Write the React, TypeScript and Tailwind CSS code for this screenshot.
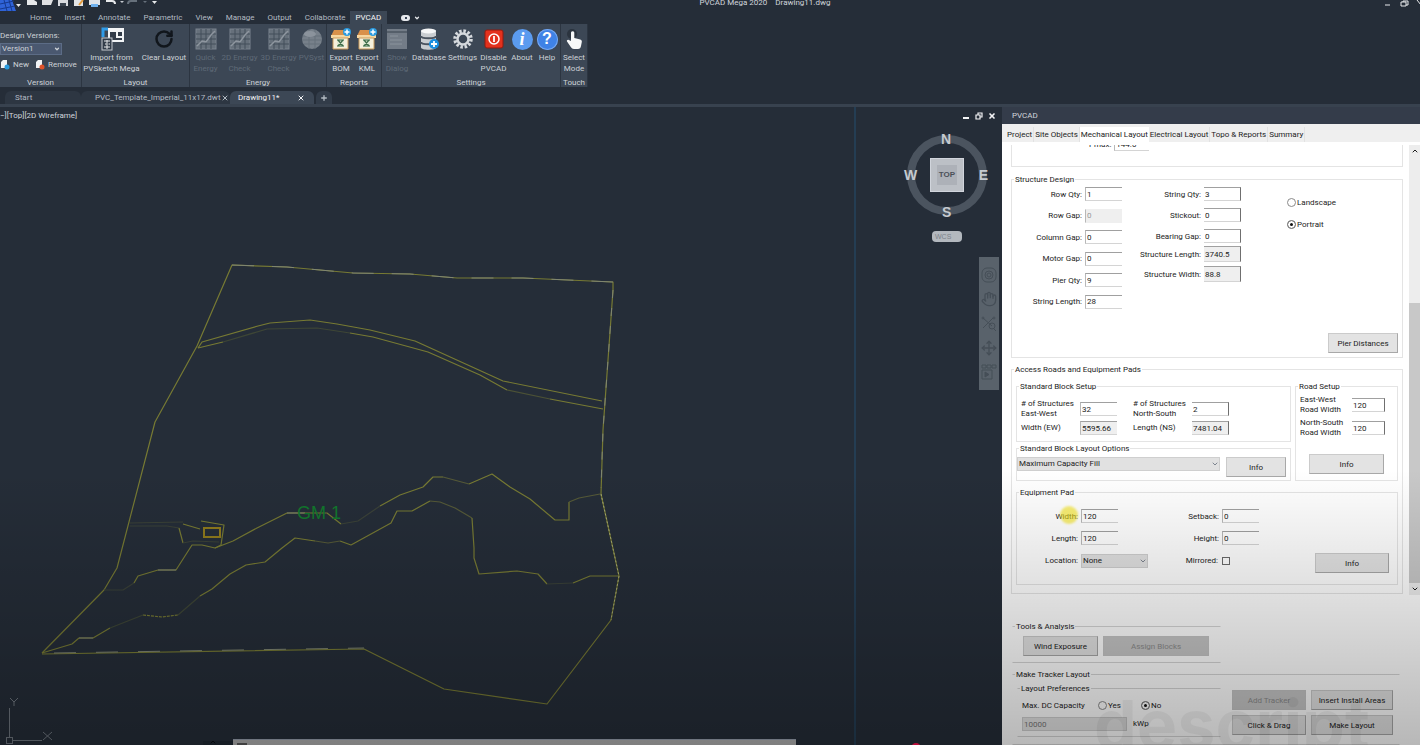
import { useId, type ReactNode } from 'react';
import { ChevronDown, ChevronUp, Hand, Move, Plus, RotateCw, X } from 'lucide-react';
import { clsx } from 'clsx';

const MENU = ['Home', 'Insert', 'Annotate', 'Parametric', 'View', 'Manage', 'Output', 'Collaborate'];

/* ---------- Ribbon icons ---------- */

function ImportIcon() {
  return (
    <svg viewBox="0 0 24 24" className="size-6">
      <path d="M3 10V2h5" fill="none" stroke="#2f9be8" strokeWidth="3" />
      <rect x="9" y="2" width="14" height="12" fill="#323c49" stroke="#f2f4f6" strokeWidth="2" />
      <path d="M9 4h14M17 5v5h6" stroke="#f2f4f6" strokeWidth="2" fill="none" />
      <rect x="2" y="11" width="10" height="12" fill="#323c49" stroke="#c5cad0" />
      <path d="M4 14h6M4 20h6M5 17h1.500M8.500 17H10M7 13v9" stroke="#e8eaec" />
    </svg>
  );
}

function GridIcon() {
  return (
    <svg viewBox="0 0 24 24" className="size-6">
      <rect x="2" y="2" width="20" height="20" fill="#66707b" stroke="#7b848f" />
      <path d="M2 7h20M2 12h20M2 17h20M7 2v20M12 2v20M17 2v20" stroke="#434e5b" />
      <path d="M3 19l5-5 4 1 5-7 4-4" stroke="#8e969f" strokeWidth="1.500" fill="none" />
    </svg>
  );
}

function SphereIcon() {
  return (
    <svg viewBox="0 0 24 24" className="size-6">
      <circle cx="12" cy="12" r="10" fill="#77808a" />
      <path d="M3 9h18M2 13h20M4 17h16M9 3v19M15 3v19" stroke="#66707b" />
      <ellipse cx="10" cy="7" rx="6" ry="3" fill="#8b939c" />
    </svg>
  );
}

function ExportIcon() {
  return (
    <svg viewBox="0 0 24 24" className="size-6">
      <path d="M2 9l3-6h11l5 6z" fill="#d9914a" />
      <path d="M2 8h19v3H2z" fill="#f7d7a0" />
      <path d="M4 11h15v11H4z" fill="#f5f0dc" stroke="#c99a5a" />
      <path d="M8 12h7v8H8z" fill="#dfe8d4" />
      <path d="M9 13l5 6M14 13l-5 6M8 13h7M8 19h7" stroke="#3c6b46" strokeWidth="1.200" />
      <circle cx="18" cy="5" r="4" fill="#2a9be0" />
      <path d="M18 2.500v5M15.500 5h5" stroke="#fff" strokeWidth="1.500" />
    </svg>
  );
}

function DialogIcon() {
  return (
    <svg viewBox="0 0 24 24" className="size-6">
      <rect x="2" y="2" width="20" height="20" fill="#737c87" />
      <path d="M2 5h20M8 5h12" stroke="#4c5662" strokeWidth="1.500" />
      <path d="M5 9h8M5 13h12M5 17h12" stroke="#8b939c" />
    </svg>
  );
}

function DatabaseIcon() {
  return (
    <svg viewBox="0 0 24 24" className="size-6">
      <path d="M4 3.500v17c0 3 15 3 15 0v-17z" fill="#c9cdd1" />
      <path d="M4 9c0 3 15 3 15 0M4 15c0 3 15 3 15 0" stroke="#4a535f" strokeWidth="2" fill="none" />
      <ellipse cx="11.500" cy="4" rx="7.500" ry="2.500" fill="#f6f7f8" />
      <circle cx="17" cy="17" r="5" fill="#1b8fe0" />
      <path d="M17 14v6M14 17h6" stroke="#fff" strokeWidth="1.800" />
    </svg>
  );
}

function GearIcon() {
  return (
    <svg viewBox="0 0 24 24" className="size-6">
      <circle cx="12" cy="12" r="8" fill="none" stroke="#d5d9dd" strokeWidth="3.500" strokeDasharray="2.500 1.700" />
      <circle cx="12" cy="12" r="5.500" fill="none" stroke="#d5d9dd" strokeWidth="2.500" />
    </svg>
  );
}

function PowerIcon() {
  return (
    <svg viewBox="0 0 24 24" className="size-6">
      <rect x="3" y="3" width="18" height="18" rx="2" fill="#e3311d" stroke="#8f1a10" />
      <circle cx="12" cy="12" r="5" fill="none" stroke="#fff" strokeWidth="1.500" />
      <path d="M12 9v6" stroke="#fff" strokeWidth="1.800" />
    </svg>
  );
}

function BadgeIcon({ glyph }: { glyph: 'i' | '?' }) {
  return (
    <span
      className={clsx(
        'flex size-[21px] items-center justify-center rounded-full leading-none font-bold text-white',
        glyph === 'i'
          ? 'bg-[#5b9bef] font-["Liberation_Serif",serif] text-[18px] italic'
          : 'bg-[#3f82e6] font-["Liberation_Sans",sans-serif] text-[16px] ring-1 ring-[#78a9f0] ring-inset',
      )}
    >
      {glyph}
    </span>
  );
}

function TouchIcon() {
  return (
    <svg viewBox="0 0 24 24" className="size-6">
      <circle cx="10" cy="7" r="5" fill="#2b343f" />
      <path
        d="M9 14V5.500a1.700 1.700 0 0 1 3.300 0V11l6 1.500c1.200.4 1.700 1.200 1.500 2.500L19 19c-.3 2-1.300 3-3 3h-4c-1.500 0-2.400-.7-3.200-2L5 14.500c-.6-1.200.8-2.200 1.800-1.500z"
        fill="#f7f8f9"
      />
    </svg>
  );
}

function DocIcon({ color }: { color: string }) {
  return (
    <svg viewBox="0 0 10 10" className="size-[10px]">
      <path d="M1 2l2-2h4v8H1z" fill="#f1f3f5" />
      <circle cx="7" cy="7" r="2.500" fill={color} />
    </svg>
  );
}

/* ---------- Header ---------- */

function TitleBar() {
  return (
    <div className="grid h-[11px] grid-cols-[1fr_auto_1fr] items-start overflow-hidden">
      <svg viewBox="0 0 165 11" className="h-[11px] w-[165px]">
        <path d="M0 0h12l4 11-16 4z" fill="#2f63d8" />
        <path d="M0 4l14-3M0 9l15-3M4 0l3 11M9 0l3 11" stroke="#173a8f" />
        <path d="M16 4h5l-2.500 3z" fill="#e8eaec" />
        <path d="M27 0h7l3 2v3H27z" fill="#e6e8ea" />
        <path d="M42 0h11l-2 5h-9z" fill="#dfe1e3" />
        <path d="M58 0h10v6H58z" fill="#d9dce0" />
        <path d="M60 3h6v3h-6z" fill="#39434f" />
        <path d="M74 0h9v6h-9z" fill="#e2e4e6" />
        <path d="M79 5l4-5" stroke="#e39a3b" strokeWidth="2" />
        <path d="M89 0h11v5H89z" fill="#dfe3e8" />
        <path d="M91 4h7v3h-7z" fill="#6fb1ee" />
        <path d="M106 1h6q3 0 3 3" stroke="#e8eaec" strokeWidth="2" fill="none" />
        <path d="M120 1h4l-2 2z" fill="#c6cacf" />
        <path d="M137 1h-6q-3 0-3 3" stroke="#66707b" strokeWidth="2" fill="none" />
        <path d="M143 1h4l-2 2z" fill="#66707b" />
        <path d="M152 1h5l-2.500 3z" fill="#e8eaec" />
      </svg>
      <div className="-mt-[3px] flex gap-2 pl-[110px] leading-[11px] text-gray-300">
        <span>PVCAD Mega 2020</span>
        <span>Drawing11.dwg</span>
      </div>
      <svg viewBox="0 0 36 11" className="h-[11px] w-9 justify-self-end">
        <path d="M1 5h5M17 2h5v4h-5zM19 2V1h5v4h-2" stroke="#e8eaec" fill="none" />
        <path d="M33 0l4 5" stroke="#e8eaec" />
      </svg>
    </div>
  );
}

function MenuBar() {
  return (
    <nav className="flex h-[13px] items-stretch pl-[30px] leading-[13px] text-[#b3bac2]">
      <div className="flex gap-[13px]">
        {MENU.map((item) => (
          <button key={item} type="button">{item}</button>
        ))}
      </div>
      <button type="button" className="ml-1 bg-[#3c4755] px-[6px] text-gray-100">PVCAD</button>
      <button type="button" aria-label="Ribbon display" className="ml-[14px] flex items-center gap-1">
        <span className="flex h-[6px] w-[9px] items-center justify-center rounded-sm bg-gray-200">
          <span className="size-[2px] bg-gray-700" />
        </span>
        <ChevronDown className="size-[6px] text-gray-200" strokeWidth={5} />
      </button>
    </nav>
  );
}

function RibbonPanel({ title, className, children }: { title: string; className: string; children: ReactNode }) {
  return (
    <section className={clsx('flex shrink-0 flex-col border-r border-[#2c3541] bg-[#3c4755]', className)}>
      <div className="flex flex-1 justify-center pt-[3px]">{children}</div>
      <h2 className="h-[11px] text-center leading-[13px] text-[#cdd2d7]">{title}</h2>
    </section>
  );
}

type ToolProps = { icon: ReactNode; lines: string[]; className: string; disabled?: boolean };

function Tool({ icon, lines, className, disabled }: ToolProps) {
  return (
    <button
      type="button"
      disabled={disabled}
      className={clsx(
        'flex shrink-0 flex-col items-center leading-[11px] whitespace-nowrap',
        disabled ? 'text-[#5f6a77]' : 'text-[#cdd2d7]',
        className,
      )}
    >
      <span className="mb-px flex size-6 items-center justify-center">{icon}</span>
      {lines.map((line) => (
        <span key={line}>{line}</span>
      ))}
    </button>
  );
}

function Ribbon() {
  return (
    <div className="flex h-[63px]">
      <RibbonPanel title="Version" className="w-[82px]">
        <div className="flex w-full flex-col pt-[2px] text-[#cdd2d7]">
          <label htmlFor="version" className="leading-[13px] whitespace-nowrap">Design Versions:</label>
          <div className="relative mt-[1px] w-[62px]">
            <select id="version" className="block h-3 w-full appearance-none border border-[#5c6c86] bg-[#4a5870] pl-[1px] leading-[10px]">
              <option>Version1</option>
            </select>
            <ChevronDown className="pointer-events-none absolute top-[3px] right-[2px] size-[6px]" strokeWidth={5} />
          </div>
          <div className="mt-1 flex gap-[6px] leading-[11px]">
            <button type="button" className="flex items-center gap-[3px]"><DocIcon color="#2a9be0" />New</button>
            <button type="button" className="flex items-center gap-[3px]"><DocIcon color="#e0522a" />Remove</button>
          </div>
        </div>
      </RibbonPanel>
      <RibbonPanel title="Layout" className="w-[108px]">
        <Tool icon={<ImportIcon />} lines={['Import from', 'PVSketch Mega']} className="w-[57px]" />
        <Tool icon={<RotateCw className="size-5 text-[#11161c]" strokeWidth={3} />} lines={['Clear Layout']} className="w-[48px]" />
      </RibbonPanel>
      <RibbonPanel title="Energy" className="w-[137px]">
        <Tool disabled icon={<GridIcon />} lines={['Quick', 'Energy']} className="w-[29px]" />
        <Tool disabled icon={<GridIcon />} lines={['2D Energy', 'Check']} className="w-[39px]" />
        <Tool disabled icon={<GridIcon />} lines={['3D Energy', 'Check']} className="w-[39px]" />
        <Tool disabled icon={<SphereIcon />} lines={['PVSyst']} className="w-[27px]" />
      </RibbonPanel>
      <RibbonPanel title="Reports" className="w-[55px]">
        <Tool icon={<ExportIcon />} lines={['Export', 'BOM']} className="w-[26px]" />
        <Tool icon={<ExportIcon />} lines={['Export', 'KML']} className="w-[26px]" />
      </RibbonPanel>
      <RibbonPanel title="Settings" className="w-[179px]">
        <Tool disabled icon={<DialogIcon />} lines={['Show', 'Dialog']} className="w-[28px]" />
        <Tool icon={<DatabaseIcon />} lines={['Database']} className="w-[36px]" />
        <Tool icon={<GearIcon />} lines={['Settings']} className="w-[31px]" />
        <Tool icon={<PowerIcon />} lines={['Disable', 'PVCAD']} className="w-[31px]" />
        <Tool icon={<BadgeIcon glyph="i" />} lines={['About']} className="w-[26px]" />
        <Tool icon={<BadgeIcon glyph="?" />} lines={['Help']} className="w-[24px]" />
      </RibbonPanel>
      <RibbonPanel title="Touch" className="w-[27px]">
        <Tool icon={<TouchIcon />} lines={['Select', 'Mode']} className="w-[26px]" />
      </RibbonPanel>
    </div>
  );
}

function FileTabs() {
  return (
    <div className="flex h-[20px] items-end border-b-[3px] border-[#38424f] text-[#b3bac2]">
      <div className="flex h-[13px] items-center">
        <button type="button" className="ml-[5px] h-full w-[76px] rounded-t-md bg-[#2d3642] pl-[10px] text-left">Start</button>
        <div className="flex h-full w-[149px] items-center justify-between rounded-t-md bg-[#2d3642] pr-[5px] pl-[14px]">
          <button type="button">PVC_Template_Imperial_11x17.dwt</button>
          <button type="button" aria-label="Close template"><X className="size-2" strokeWidth={3} /></button>
        </div>
        <div className="flex h-full w-[84px] items-center justify-between rounded-t-md bg-[#3c4755] pr-[9px] pl-2 text-gray-100">
          <button type="button">Drawing11*</button>
          <button type="button" aria-label="Close drawing"><X className="size-2" strokeWidth={3} /></button>
        </div>
        <button type="button" aria-label="New tab" className="ml-[2px] flex h-full w-4 items-center justify-center rounded-t-md bg-[#323c49]">
          <Plus className="size-2" strokeWidth={4} />
        </button>
      </div>
    </div>
  );
}

/* ---------- Drawing area ---------- */

function SitePlan() {
  return (
    <svg viewBox="0 107 1002 638" preserveAspectRatio="xMinYMin slice" className="absolute inset-0 size-full">
      <path d="M855 107v638" stroke="#24435c" strokeWidth="1.500" />
      <g fill="none" stroke="#777a33" strokeWidth="1.200" strokeLinejoin="round">
        <path d="M42 653L104 590l13-22 38-146 42-76 35-81 55 2 66 6 57 1 47 4h66l90 4v8l-10 140-2 64" />
        <path d="M601 494l18 82-8 44-64 84-103-15-80-40-322 5" />
        <path d="M198 348l4-6 56-16 12-3 40-3 27 4 33 6 45 11 55 25 33 15 99 20" />
        <path d="M198 348l25-6" />
        <path d="M223 342l44-13 50-1 33 5" stroke="#3e4636" />
        <path d="M350 333l23 4 55 15 52 23 27 15" />
        <path d="M507 390l43 9" stroke="#4c5236" />
        <path d="M550 399l53 10" />
        <path d="M130 523l53-1M130 526h37l12 2" stroke="#3b4238" />
        <path d="M183 524l17 5M179 528l4 15M201 521l23 4-3 20-6 3" />
        <path d="M183 543l10-2 26 1M104 590h19l11-7" stroke="#3b4238" />
        <path d="M134 583l4-7 20-6h18l16-25h10l13 3 18-7 24-13 30-15h40l14 11" />
        <path d="M341 524l17-3 22-15" stroke="#3b4238" />
        <path d="M380 506l20-11 23-8 10-10h10M469 484l23-10 18 13 20 12 25 21h14v-18" />
        <path d="M443 477l26 7M569 502l10-4 21-4" stroke="#565a38" />
        <path d="M42 653l30-9 7-6h14l17-10" />
        <path d="M110 628l33-13M178 615l22-19" stroke="#3e4636" />
        <path d="M143 615l19 2 16-2" strokeDasharray="3 1" />
        <path d="M200 596l12-7 18-15 16-9 19-3 17-14 13-10 20 3M340 541l11 4 40-22 6-12h15l18-10" />
        <path d="M315 541l13 2 12-2M430 501l10 1 15 6 17 10" stroke="#565a38" />
        <path d="M472 518l2 30v10l5 16 38-3 21 3 9 10M573 583l17-7h29" />
        <path d="M547 584l26-1" stroke="#3b4238" />
      </g>
      <path d="M601 494l18 82-8 44" stroke="#a5a873" strokeDasharray="2 2" fill="none" />
      <rect x="204" y="528" width="16" height="9" stroke="#8f7a1d" strokeWidth="2" fill="none" />
      <g fill="none" stroke="#808672">
        <path d="M232 265l55 2 66 6 57 1 47 4h66l90 4" strokeDasharray="22 18" />
        <path d="M54 653l310-5" strokeDasharray="22 20" />
        <path d="M613 290l-10 140-2 58" strokeDasharray="8 10" />
        <path d="M287 513h18M158 570h18M79 638h14" />
      </g>
      <text x="297" y="519" fill="#12782d" fontSize="18" fontFamily="Liberation Sans, sans-serif">GM 1</text>
      <g stroke="#6f767f" fill="none">
        <path d="M9.500 738v-30M12 740.500h30" />
        <rect x="6.500" y="737.500" width="6" height="6" />
        <path d="M10 698l4 4 4-4M14 702v4M43 732l9 8M52 732l-9 8" />
      </g>
    </svg>
  );
}

function ViewCube() {
  return (
    <div className="flex w-20 flex-col items-center font-['Liberation_Sans',sans-serif] font-bold text-[#c5cad0]">
      <div className="relative size-20">
        <div className="absolute inset-0 rounded-full border-8 border-[#4b545f]" />
        <span className="absolute -top-[3px] left-[34px] text-[14px] leading-[14px]">N</span>
        <span className="absolute top-[33px] -left-[3px] text-[14px] leading-[14px]">W</span>
        <span className="absolute top-[33px] -right-[1px] text-[14px] leading-[14px]">E</span>
        <span className="absolute -bottom-1 left-[35px] text-[14px] leading-[14px]">S</span>
        <button type="button" className="absolute top-[23px] left-[23px] flex size-[34px] items-center justify-center border border-gray-300 bg-[#bcc0c6]">
          <span className="bg-[#adb1b8] px-[2px] py-1 text-[8px] leading-3 text-[#4b5058]">TOP</span>
        </button>
      </div>
      <button type="button" className="mt-4 h-[11px] w-[30px] rounded-sm bg-[#b3b8be] pl-[3px] text-left text-[7px] leading-[11px] font-normal text-[#7d838a]">
        WCS
      </button>
    </div>
  );
}

function NavigationBar() {
  return (
    <div className="flex h-[133px] w-5 flex-col items-center justify-between bg-[#59626b] py-[10px] text-[#454e57]">
      <svg viewBox="0 0 16 16" className="size-4" fill="none" stroke="currentColor">
        <rect x="1" y="1" width="14" height="14" rx="5" />
        <circle cx="8" cy="8" r="4" />
        <circle cx="8" cy="8" r="2" />
      </svg>
      <Hand className="size-4" strokeWidth={2} />
      <svg viewBox="0 0 16 16" className="size-4" fill="none" stroke="currentColor">
        <path d="M2 2l9 8M12 2L2 12M12 12l3 3" />
        <circle cx="11" cy="10" r="3" />
        <circle cx="2" cy="2" r="1" />
        <circle cx="13" cy="2" r="1" />
      </svg>
      <Move className="size-4" strokeWidth={2} />
      <svg viewBox="0 0 16 16" className="size-4" fill="none" stroke="currentColor">
        <path d="M1 1h4v3H1zM6 1h4v3H6zM11 1h4v3h-4zM1 6h10v9H1z" />
        <path d="M4 8l4 2.500L4 13z" fill="currentColor" />
      </svg>
    </div>
  );
}

function Canvas() {
  return (
    <main className="relative min-w-0 flex-1 overflow-hidden bg-[#252d38]">
      <SitePlan />
      <p className="absolute top-[3px] left-0 leading-[11px] text-gray-300">−][Top][2D Wireframe]</p>
      <div className="absolute top-[5px] right-[6px] flex gap-[5px] text-gray-100">
        <svg viewBox="0 0 8 8" className="size-2"><path d="M1 6h6" stroke="currentColor" strokeWidth="2" /></svg>
        <svg viewBox="0 0 8 8" className="size-2" fill="none" stroke="currentColor">
          <path d="M1 3h4v4H1zM3 3V1h4v4H5" strokeWidth="1.200" />
        </svg>
        <X className="size-2" strokeWidth={5} />
      </div>
      <div className="absolute top-7 right-[15px]"><ViewCube /></div>
      <div className="absolute top-[150px] right-[3px]"><NavigationBar /></div>
      <div className="absolute bottom-0 left-[203px] flex h-[6px] w-[593px] items-end">
        <div className="flex h-1 w-[30px] items-end gap-1 overflow-hidden bg-[#1f2832] pl-[6px]">
          <X className="size-2" />
        </div>
        <div className="h-full flex-1 border-t border-gray-400 bg-[#b0b0b0] pl-1">
          <div className="mt-[3px] h-[2px] w-[10px] bg-[#5a5a5a]" />
        </div>
      </div>
      <div className="absolute -bottom-[8px] left-[911px] size-[10px] rounded-full bg-[#ff1450]" />
    </main>
  );
}

/* ---------- PVCAD palette ---------- */

function Group({ title, className, children }: { title: string; className?: string; children: ReactNode }) {
  return (
    <fieldset className={clsx('min-w-0 border border-[#e4e4e4]', className)}>
      <legend className="ml-[2px] h-[10px] px-[1px] leading-3">{title}</legend>
      {children}
    </fieldset>
  );
}

type FieldProps = { label: string; value: string; edge?: 'left' | 'right'; disabled?: boolean; readOnly?: boolean; className?: string };

function Field({ label, value, edge = 'left', disabled, readOnly, className }: FieldProps) {
  const id = useId();
  return (
    <div className="flex items-center justify-end gap-[3px]">
      <label htmlFor={id} className="leading-[11px] whitespace-nowrap">{label}</label>
      <TextBox id={id} value={value} edge={edge} disabled={disabled} readOnly={readOnly} className={clsx('w-[37px]', className)} />
    </div>
  );
}

function TextBox({ id, value, edge = 'left', disabled, readOnly, className }: Omit<FieldProps, 'label'> & { id: string }) {
  return (
    <input
      id={id}
      type="text"
      defaultValue={value}
      disabled={disabled}
      readOnly={readOnly}
      className={clsx(
        'shrink-0 border-y px-[1px] leading-3',
        disabled ? 'border-transparent text-[#9a9a9a]' : 'border-t-[#a0a0a0] border-b-[#d4d4d4]',
        edge === 'left' ? 'border-l border-l-[#b8b8b8]' : 'border-r border-r-[#6f6f6f]',
        disabled || readOnly ? 'bg-[#efefef]' : 'bg-white',
        className?.includes('h-4') ? '' : 'h-[14px]',
        className,
      )}
    />
  );
}

/* Two-line caption in one grid cell, its box in the next */
function StackedField({ lines, value, edge, readOnly, className }: Omit<FieldProps, 'label'> & { lines: string[] }) {
  const id = useId();
  return (
    <>
      <label htmlFor={id} className="leading-[10px] whitespace-nowrap">
        {lines.map((line) => (
          <span key={line} className="block">{line}</span>
        ))}
      </label>
      <TextBox id={id} value={value} edge={edge} readOnly={readOnly} className={className} />
    </>
  );
}

function Radio({ name, label, checked }: { name: string; label: string; checked?: boolean }) {
  return (
    <label className="flex items-center gap-[1px] leading-[11px]">
      <input
        type="radio"
        name={name}
        defaultChecked={checked}
        className="size-[9px] appearance-none rounded-full border border-[#8a8a8a] bg-white checked:bg-[#111] checked:shadow-[inset_0_0_0_2px_#fff]"
      />
      {label}
    </label>
  );
}

function Dropdown({ id, value, className }: { id: string; value: string; className: string }) {
  return (
    <div className={clsx('relative shrink-0', className)}>
      <select id={id} aria-label={value} className="block h-[14px] w-full appearance-none border border-[#cfcfcf] bg-[#e1e1e1] pl-[1px] leading-3">
        <option>{value}</option>
      </select>
      <ChevronDown className="pointer-events-none absolute top-[3px] right-[1px] size-2 text-gray-600" />
    </div>
  );
}

function PushButton({ children, className, disabled }: { children: string; className: string; disabled?: boolean }) {
  return (
    <button
      type="button"
      disabled={disabled}
      className={clsx(
        'h-5 shrink-0 border leading-[11px] whitespace-nowrap',
        disabled ? 'border-[#c4c4c4] bg-[#c6c6c6] text-[#8b8b8b]' : 'border-[#cbcbcb] border-r-[#a8a8a8] border-b-[#a8a8a8] bg-[#e3e3e3]',
        className,
      )}
    >
      {children}
    </button>
  );
}

function StructureDesign() {
  return (
    <Group title="Structure Design" className="mt-[7px] h-[184px]">
      <div className="flex pt-[3px]">
        <div className="flex h-[122px] w-[110px] flex-col justify-between">
          <Field label="Row Qty:" value="1" />
          <Field label="Row Gap:" value="0" disabled />
          <Field label="Column Gap:" value="0" />
          <Field label="Motor Gap:" value="0" />
          <Field label="Pier Qty:" value="9" />
          <Field label="String Length:" value="28" />
        </div>
        <div className="flex w-[119px] flex-col gap-[7px]">
          <Field label="String Qty:" value="3" edge="right" />
          <Field label="Stickout:" value="0" edge="right" />
          <Field label="Bearing Gap:" value="0" edge="right" />
          <div className="-mt-[4px] flex flex-col gap-1">
            <Field label="Structure Length:" value="3740.5" edge="right" readOnly className="h-4" />
            <Field label="Structure Width:" value="88.8" edge="right" readOnly className="h-4" />
          </div>
        </div>
        <div className="flex flex-1 flex-col gap-[11px] pt-[10px] pl-[46px]">
          <Radio name="orientation" label="Landscape" />
          <Radio name="orientation" label="Portrait" checked />
        </div>
      </div>
      <div className="mt-6 flex justify-end pr-1">
        <PushButton className="w-[70px]">Pier Distances</PushButton>
      </div>
    </Group>
  );
}

function AccessRoads() {
  return (
    <Group title="Access Roads and Equipment Pads" className="mt-[6px] h-[230px]">
      <div className="flex gap-1 px-1 pt-[7px]">
        <div className="flex flex-1 flex-col">
          <Group title="Standard Block Setup" className="h-[61px]">
            <div className="grid grid-cols-[59px_53px_59px_37px] items-center gap-y-[2px] pt-2 pl-1">
              <StackedField lines={['# of Structures', 'East-West']} value="32" className="w-[37px]" />
              <StackedField lines={['# of Structures', 'North-South']} value="2" edge="right" className="w-[37px]" />
              <StackedField lines={['Width (EW)']} value="5595.66" readOnly className="w-[37px]" />
              <StackedField lines={['Length (NS)']} value="7481.04" edge="right" readOnly className="w-[37px]" />
            </div>
          </Group>
          <Group title="Standard Block Layout Options" className="mt-[1px] h-[38px]">
            <div className="flex items-start justify-between pt-1 pr-1">
              <Dropdown id="block-layout" value="Maximum Capacity Fill" className="w-[203px]" />
              <PushButton className="w-[60px]">Info</PushButton>
            </div>
          </Group>
        </div>
        <Group title="Road Setup" className="h-[100px] w-[103px]">
          <div className="grid grid-cols-[52px_33px] items-center gap-y-[3px] pt-1 pl-1">
            <StackedField lines={['East-West', 'Road Width']} value="120" edge="right" className="w-[33px]" />
            <StackedField lines={['North-South', 'Road Width']} value="120" edge="right" className="w-[33px]" />
          </div>
          <div className="mt-4 flex justify-center">
            <PushButton className="w-[75px]">Info</PushButton>
          </div>
        </Group>
      </div>
      <Group title="Equipment Pad" className="mx-1 mt-[6px] h-[98px]">
        <div className="flex h-[76px] pt-3 pr-2">
          <div className="flex w-[131px] flex-col gap-[9px]">
            <div className="relative flex w-[101px] flex-col gap-2">
              <Field label="Width:" value="120" />
              <Field label="Length:" value="120" />
              <span className="pointer-events-none absolute -top-[3px] right-[40px] size-[18px] rounded-full bg-[#f4e216]/60 blur-[1px]" />
            </div>
            <div className="flex items-center justify-end gap-[3px]">
              <label htmlFor="location">Location:</label>
              <Dropdown id="location" value="None" className="w-[67px]" />
            </div>
          </div>
          <div className="flex w-[111px] flex-col gap-2">
            <Field label="Setback:" value="0" />
            <Field label="Height:" value="0" />
            <div className="flex h-4 items-center justify-end gap-1 pr-[29px]">
              <label htmlFor="mirrored">Mirrored:</label>
              <input id="mirrored" type="checkbox" className="size-2 appearance-none border border-[#6b6b6b] bg-white" />
            </div>
          </div>
          <div className="flex flex-1 items-end justify-end">
            <PushButton className="w-[74px]">Info</PushButton>
          </div>
        </div>
      </Group>
    </Group>
  );
}

function PaletteScroller() {
  return (
    <div className="flex h-[450px] shrink-0">
      <div className="min-w-0 flex-1 overflow-hidden pr-[6px] pl-[9px]">
        <div className="h-[22px] border-x border-b border-[#e4e4e4] pl-[77px]">
          <div className="flex h-[6px] w-[60px] items-end overflow-hidden">
            <Field label="Pmax:" value="144.0" />
          </div>
        </div>
        <StructureDesign />
        <AccessRoads />
      </div>
      <div className="flex w-[11px] flex-col items-center bg-[#ededed]">
        <ChevronUp className="my-[2px] size-2" strokeWidth={3} />
        <div className="mt-[146px] w-full flex-1 bg-[#c8c8c8]" />
        <ChevronDown className="my-[2px] size-2" strokeWidth={3} />
      </div>
    </div>
  );
}

function PaletteFooter() {
  return (
    <div className="flex flex-1 flex-col pt-[26px] pr-5 pl-[10px]">
      <Group title="Tools & Analysis" className="h-[42px] w-[209px] border-x-transparent border-y-[#d6d6d6]">
        <div className="flex gap-[5px] pt-[5px] pl-[10px]">
          <PushButton className="w-[75px]">Wind Exposure</PushButton>
          <PushButton disabled className="w-[106px]">Assign Blocks</PushButton>
        </div>
      </Group>
      <Group title="Make Tracker Layout" className="mt-[6px] flex-1 border-x-transparent border-y-[#d6d6d6]">
        <div className="flex justify-between pt-1 pl-1">
          <Group title="Layout Preferences" className="h-[54px] w-[204px] border-x-transparent border-y-[#d6d6d6]">
            <div className="flex items-center pt-[7px] pl-1">
              <span className="w-[76px] leading-[11px]">Max. DC Capacity</span>
              <span className="w-[43px]"><Radio name="dc-cap" label="Yes" /></span>
              <Radio name="dc-cap" label="No" checked />
            </div>
            <div className="mt-[6px] flex items-center gap-[6px] pl-1">
              <input aria-label="Capacity in kWp" disabled defaultValue="10000" className="h-[14px] w-[105px] border border-[#d0d0d0] bg-[#e4e4e4] px-[1px] text-[#777]" />
              <span>kWp</span>
            </div>
          </Group>
          <div className="grid grid-cols-[74px_82px] gap-x-[5px] gap-y-[5px] self-start pt-[7px] pr-[6px]">
            <PushButton disabled className="w-full">Add Tracker</PushButton>
            <PushButton className="w-full">Insert Install Areas</PushButton>
            <PushButton className="w-full">Click &amp; Drag</PushButton>
            <PushButton className="w-full">Make Layout</PushButton>
          </div>
        </div>
      </Group>
    </div>
  );
}

function Palette() {
  return (
    <aside className="relative flex w-[418px] shrink-0 flex-col overflow-hidden bg-white text-[#1c1c1c]">
      <header className="flex h-[17px] shrink-0 items-center bg-[#343c4a] pl-[10px] text-gray-300">PVCAD</header>
      <div className="flex h-[18px] shrink-0 items-stretch bg-[#efefef] pt-[3px] pl-1 whitespace-nowrap">
        {['Project', 'Site Objects', 'Mechanical Layout', 'Electrical Layout', 'Topo & Reports', 'Summary'].map((tab) => (
          <button
            key={tab}
            type="button"
            className={clsx('px-[1px]', tab === 'Mechanical Layout' ? 'bg-white' : 'border-r border-[#e2e2e2]')}
          >
            {tab}
          </button>
        ))}
      </div>
      <div className="h-[3px] shrink-0" />
      <PaletteScroller />
      <PaletteFooter />
      <span className="pointer-events-none absolute -bottom-[14px] left-[92px] font-['Inter',sans-serif] text-[68px] leading-[70px] font-bold text-black/5">
        descript
      </span>
    </aside>
  );
}

export default function App() {
  return (
    <div className="relative flex h-screen flex-col overflow-hidden bg-[#252d38] font-['Roboto',sans-serif] text-[8px]">
      <header className="shrink-0">
        <TitleBar />
        <MenuBar />
        <Ribbon />
        <FileTabs />
      </header>
      <div className="flex min-h-0 flex-1">
        <Canvas />
        <Palette />
      </div>
      <div className="pointer-events-none absolute inset-x-0 bottom-0 h-[275px] bg-linear-to-b from-transparent to-black/28" />
    </div>
  );
}
